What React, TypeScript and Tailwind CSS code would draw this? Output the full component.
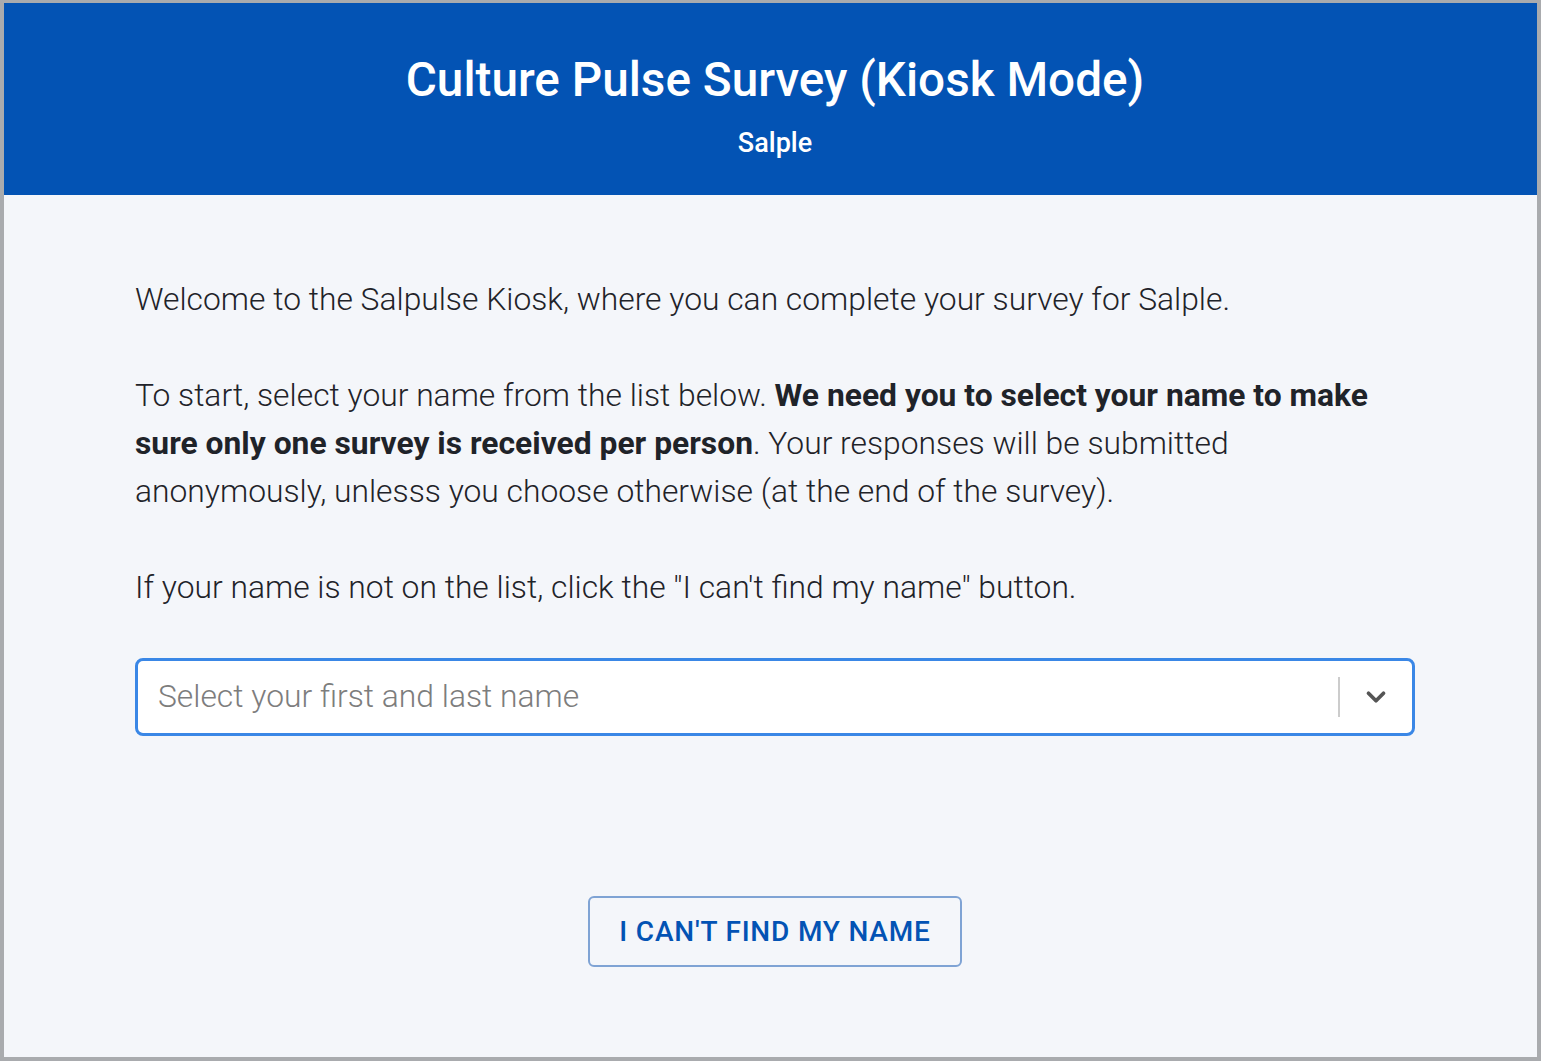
import { ChevronDown } from 'lucide-react'

const App = () => {
  return (
    <div
      className="w-full h-[1061px] flex flex-col bg-[#f4f6fa] border-l-4 border-r-4 border-t-[3px] border-b-4 border-[#a9abae] overflow-hidden"
      style={{ fontFamily: 'Roboto, "Liberation Sans", sans-serif' }}
    >
      {/* Header */}
      <header className="h-[192px] shrink-0 bg-[#0353b4] text-white flex flex-col items-center pl-[9px]">
        <h1 className="mt-[46px] text-[47.7px] leading-[62px] font-medium">
          Culture Pulse Survey (Kiosk Mode)
        </h1>
        <p className="mt-[16px] text-[27px] leading-[32px] font-medium">Salple</p>
      </header>

      {/* Body */}
      <main className="flex-1 pl-[131px] pr-[122px] pt-[80px]">
        <div className="text-[31.8px] leading-[48px] font-light text-[#1f2329] space-y-[48px]">
          <p>Welcome to the Salpulse Kiosk, where you can complete your survey for Salple.</p>
          <p>
            To start, select your name from the list below.{' '}
            <strong className="font-bold">
              We need you to select your name to make sure only one survey is received per person
            </strong>
            . Your responses will be submitted anonymously, unlesss you choose otherwise (at the end of the survey).
          </p>
          <p>If your name is not on the list, click the "I can't find my name" button.</p>
        </div>

        <div className="mt-[47px] h-[78px] bg-white border-[3px] border-[#3a87e6] rounded-[8px] flex items-center">
          <span className="flex-1 pl-[20px] text-[31.8px] font-light text-[#7d7d7d]">
            Select your first and last name
          </span>
          <span className="w-[2px] h-[40px] bg-[#cccccc]" />
          <span className="w-[72px] flex items-center justify-center text-[#555555]">
            <ChevronDown size={30} strokeWidth={3} />
          </span>
        </div>

        <div className="flex justify-center mt-[160px]">
          <button className="w-[374px] h-[71px] border-2 border-[#7fa3d4] rounded-[6px] text-[#0353b4] text-[28px] font-medium tracking-[0.8px]">
            I CAN'T FIND MY NAME
          </button>
        </div>
      </main>
    </div>
  )
}

export default App
